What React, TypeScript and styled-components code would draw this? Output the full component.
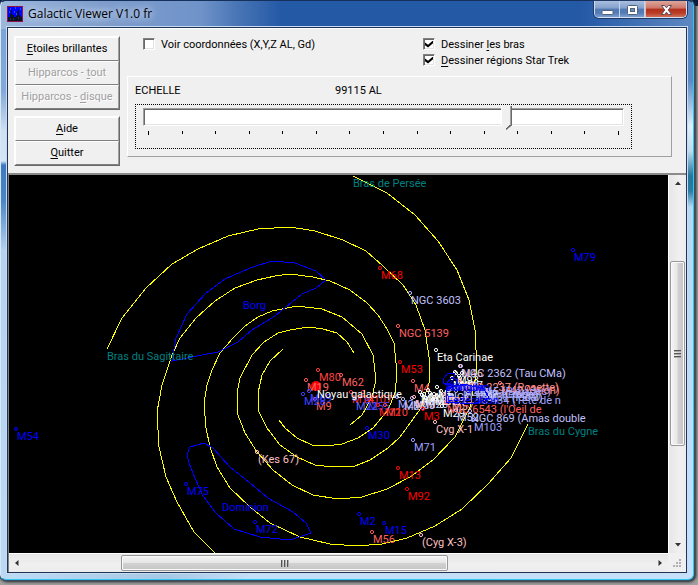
import React from "react";
import styled, { createGlobalStyle } from "styled-components";

const UI_FONT = `Roboto, "Liberation Sans", sans-serif`;
const TITLE_FONT = `"Open Sans", "Noto Sans", sans-serif`;

const GlobalStyle = createGlobalStyle`
  * { box-sizing: border-box; }
  body { margin: 0; background: #a0a0a0; font-family: ${UI_FONT}; font-size: 11px; color: #000; }
`;

/* ---------- window frame ---------- */

const Desktop = styled.div`
  min-height: 100vh;
  display: flex;
  padding: 0 4px 5px 0;
  background: linear-gradient(to right, #0a1c40, #14336a 60%, #0a1c40) top / 100% 6px no-repeat, #a0a0a0;
`;

const Frame = styled.main`
  flex: 1;
  min-width: 0;
  display: flex;
  flex-direction: column;
  border: 1px solid;
  border-color: #16305c #35c5ec #35c5ec #d5e8fa;
  border-radius: 6px;
  padding: 0 6px 6px;
  background:
    linear-gradient(to right, #9db7dc 0, #7e9dcc 100px, #6f93c9 200px, #4a76b6 235px, #2459a6 280px, #2459a6 580px, #5d88c2 100%) top / 100% 28px no-repeat,
    linear-gradient(#7ba3d4 0, #84a9d6 90px, #cfe0f1 130px, #d4e5f5 160px, #3f78bd 164px, #4d86c6 200px, #b6d2ee 250px, #bcd9f4 100%) left / 8px 100% no-repeat,
    linear-gradient(#5584c2 0, #5d8ac5 80px, #e0eef8 125px, #c0dcee 150px, #26749a 175px, #2b7ba2 190px, #b7d8f0 206px, #c4e0fc 100%) right / 8px 100% no-repeat,
    linear-gradient(to right, #bddcf6, #a5c8e6 24%, #c4dff8 36%, #c4e0fa) bottom / 100% 8px no-repeat;
  box-shadow: 0 0 0 1px #30506c, 1px 1px 3px 1px #222;
`;

const TitleBar = styled.header`
  height: 26px;
  flex: none;
  display: flex;
  align-items: flex-start;
  gap: 5px;
`;

const AppIcon = styled.svg`
  width: 16px;
  height: 16px;
  margin-top: 5px;
  flex: none;
`;

const Title = styled.h1`
  flex: 1;
  margin: 4px 0 0;
  font: 400 12px/18px ${TITLE_FONT};
  text-shadow: 0 0 6px #c5d5ee, 0 0 8px #c5d5ee, 0 0 10px #b5c9e8;
`;

const CaptionButtons = styled.div`
  display: flex;
  height: 17px;
  border: 1px solid #d0dff2;
  border-top: 0;
  border-radius: 0 0 5px 5px;
  overflow: hidden;
  box-shadow: 0 0 0 1px #203a68;
`;

const CaptionButton = styled.button<{ $close?: boolean }>`
  width: ${(p) => (p.$close ? 41 : 25)}px;
  display: grid;
  place-items: center;
  padding: 0;
  border: 0;
  border-left: ${(p) => (p.$close ? "1px solid #e5bdb5" : "0")};
  border-right: ${(p) => (p.$close ? "0" : "1px solid #c3d4ec")};
  background: ${(p) =>
    p.$close
      ? "linear-gradient(#dda59b 0, #cc7668 45%, #b2301c 50%, #b93c25 75%, #d0705a 100%)"
      : "linear-gradient(#a9bfdf 0, #839fcb 45%, #5179b4 50%, #537cb8 75%, #7f9fd0 100%)"};
`;

const Client = styled.div`
  flex: 1;
  min-height: 0;
  display: flex;
  flex-direction: column;
  border: 1px solid #1f3557;
  outline: 1px solid #c9dbf0;
  background: #f0f0f0;
`;

/* ---------- control panel ---------- */

const Panel = styled.section`
  display: flex;
  gap: 7px;
  padding: 7px 14px 16px 6px;
  height: 145px;
  flex: none;
  border-top: 1px solid #fff;
`;

const ButtonColumn = styled.div`
  width: 106px;
  flex: none;
  display: flex;
  flex-direction: column;
  gap: 6px;
`;

const ButtonGroup = styled.div`
  display: flex;
  flex-direction: column;
  border: 1px solid;
  border-color: #fff #696969 #696969 #fff;
`;

const PushButton = styled.button`
  height: 24px;
  padding: 0;
  border: 1px solid;
  border-color: #fff #a0a0a0 #808080 #fff;
  background: #f0f0f0;
  font: 400 11px/14px ${UI_FONT};
  color: #000;
  &:disabled { color: #a0a0a0; text-shadow: 1px 1px 0 #fff; }
  u { text-underline-offset: 2px; }
`;

const Settings = styled.div`
  flex: 1;
  min-width: 0;
  display: flex;
  flex-direction: column;
  justify-content: space-between;
`;

const Options = styled.div`
  display: grid;
  grid-template-columns: 280px 1fr;
  padding-left: 16px;
`;

const OptionList = styled.div`
  display: flex;
  flex-direction: column;
`;

const CheckLabel = styled.label`
  height: 16px;
  display: flex;
  align-items: center;
  gap: 6px;
  white-space: nowrap;
  u { text-underline-offset: 2px; }
`;

const CheckBox = styled.input`
  appearance: none;
  width: 12px;
  height: 12px;
  margin: 0;
  display: grid;
  place-items: center;
  border: 1px solid;
  border-color: #808080 #fff #fff #808080;
  box-shadow: inset 1px 1px 0 #696969, inset -1px -1px 0 #e3e3e3;
  background: #fff;
  &:checked::after {
    content: "";
    width: 8px;
    height: 7px;
    background: #000;
    clip-path: polygon(0 30%, 38% 62%, 100% 0, 100% 40%, 38% 100%, 0 68%);
  }
`;

const ScaleBox = styled.div`
  height: 81px;
  padding: 7px 39px 0 7px;
  border: 1px solid;
  border-color: #fff #a0a0a0 #a0a0a0 #fff;
`;

const ScaleCaption = styled.div`
  display: grid;
  grid-template-columns: 200px 1fr;
  line-height: 14px;
  margin-bottom: 6px;
`;

const SliderFrame = styled.div`
  height: 45px;
  padding: 2px 7px;
  border: 1px dotted #000;
`;

const Slider = styled.input`
  appearance: none;
  display: block;
  width: 100%;
  height: 24px;
  margin: 0;
  outline: 0;
  background: transparent;
  &::-webkit-slider-runnable-track {
    height: 18px;
    margin-bottom: 4px;
    border: 1px solid;
    border-color: #a0a0a0 #fff #fff #a0a0a0;
    box-shadow: inset 1px 1px 0 #696969, inset -1px -1px 0 #e3e3e3;
    background: #fff;
  }
  &::-webkit-slider-thumb {
    appearance: none;
    width: 11px;
    height: 24px;
    margin-top: -3px;
    background:
      linear-gradient(135deg, #f0f0f0 32%, #696969 32%) bottom right / 6px 5px no-repeat,
      linear-gradient(to right, #fff 1px, #f0f0f0 1px 9px, #a0a0a0 9px 10px, #696969 10px);
    clip-path: polygon(0 0, 100% 0, 100% 79%, 50% 100%, 0 79%);
  }
`;

const Ticks = styled.div`
  display: flex;
  justify-content: space-between;
  padding: 0 5px;
`;

const Tick = styled.span`
  width: 1px;
  height: 3px;
  background: #000;
  &:first-child, &:last-child { height: 4px; }
`;

/* ---------- viewport ---------- */

const Viewport = styled.section`
  flex: 1;
  display: grid;
  grid-template-columns: minmax(0, 1fr) 18px;
  grid-template-rows: minmax(378px, 1fr) 19px;
  border-top: 2px solid #8a8a8a;
  border-left: 1px solid #808080;
`;

const StarMap = styled.svg`
  display: block;
  width: 100%;
  height: 100%;
  background: #000;
  font-family: ${UI_FONT};
  font-size: 11px;
`;

const ScrollBar = styled.div<{ $vertical?: boolean }>`
  display: flex;
  flex-direction: ${(p) => (p.$vertical ? "column" : "row")};
  padding: ${(p) => (p.$vertical ? "0 1px" : "1px 0")};
  border: solid #fff;
  border-width: ${(p) => (p.$vertical ? "0 0 0 1px" : "1px 0 0")};
  background: linear-gradient(${(p) => (p.$vertical ? "to right" : "to bottom")}, #e6e6e6, #f0f0f0 60%, #ececec);
`;

const ScrollArrow = styled.button`
  width: 16px;
  height: 16px;
  flex: none;
  display: grid;
  place-items: center;
  padding: 0;
  border: 0;
  background: transparent;
`;

const ScrollGap = styled.div<{ $share: number }>`
  flex: ${(p) => p.$share} 0 0;
`;

const ScrollThumb = styled.div<{ $share: number; $vertical?: boolean }>`
  flex: ${(p) => p.$share} 0 0;
  display: flex;
  flex-direction: ${(p) => (p.$vertical ? "column" : "row")};
  align-items: center;
  justify-content: center;
  gap: 1px;
  border: 1px solid #989898;
  border-radius: 2px;
  box-shadow: inset 0 0 0 1px #fafafa;
  background: linear-gradient(${(p) => (p.$vertical ? "to right" : "to bottom")}, #f5f5f5, #e6e6e6 48%, #d2d2d2 52%, #c4c4c6);
`;

const Ridge = styled.span<{ $vertical?: boolean }>`
  width: ${(p) => (p.$vertical ? 7 : 2)}px;
  height: ${(p) => (p.$vertical ? 2 : 7)}px;
  background: ${(p) => (p.$vertical ? "linear-gradient(#555 50%, #aaa 50%)" : "linear-gradient(to right, #555 50%, #aaa 50%)")};
`;

const Grip = styled.svg`
  width: 10px;
  height: 10px;
  place-self: end;
  margin: 0 4px 3px 0;
`;

/* ---------- chart data ---------- */

const ARMS = [
  "107,349 122,318 146,288 172,264 198,249 228,236 258,229 290,227 315,231 343,240 366,251 383,266 403,285 416,305 425,330 429,357 429,383 421,408 400,437 388,448 370,460 355,466 333,467 315,465 297,457 280,445 267,428 258,410 258,393 262,375 270,361 283,349",
  "353,176 387,193 415,215 438,241 457,270 469,300 475,330 477,370 470,407 455,437 433,460 410,477 387,489 362,497 338,499 313,495 292,485 273,470 257,452 245,433 238,415 237,393 240,378 252,355 264,342 278,333 290,330 308,327 323,329 337,333 347,342 354,353",
  "528,424 511,458 488,484 462,509 435,526 407,538 382,544 357,546 330,544 300,537 270,523 250,507 230,488 217,467 210,447 206,428 204,403 207,385 212,370 220,353 233,338 245,326 258,317 272,311 297,306 322,309 342,317 362,334 373,355 376,380 372,397 362,415 350,425",
  "215,553 194,532 177,502 166,477 159,447 157,412 162,385 172,355 180,338 196,318 215,301 235,288 257,280 275,276 290,274 313,277 330,281 350,290 367,303 378,315 387,329 394,343 397,373 395,393 388,410 373,428 358,438 342,444 327,446 312,445 297,438 285,428 279,420",
];

const REGIONS = [
  "172,361 176,338 187,314 205,294 225,279 250,268 272,261 295,263 316,271 326,280 316,288 302,294 292,302 275,316 252,330 238,342 218,352 197,356",
  "204,443 190,447 187,454 189,463 195,478 203,496 216,513 234,529 260,537 290,540 311,533 306,523 293,512 268,498 250,483 230,467 213,448",
  "446,389 446,402 474,404 489,398 484,389 464,384",
  "444,378 448,373 455,374 453,380 448,385 443,383",
  "446,384 452,377 457,380 456,386",
];

type Star = [name: string, x: number, y: number, color: string];

const STARS: Star[] = [
  ["M68", 380, 268, "#f00"],
  ["NGC 3603", 410, 293, "#c0c0ff"],
  ["NGC 5139", 398, 326, "#ff6060"],
  ["M53", 400, 362, "#f00"],
  ["M79", 573, 250, "#00f"],
  ["M54", 16, 429, "#00f"],
  ["M75", 186, 484, "#00f"],
  ["M72", 255, 522, "#00f"],
  ["M2", 359, 514, "#00f"],
  ["M15", 384, 523, "#00f"],
  ["M56", 372, 532, "#ff6060"],
  ["(Cyg X-3)", 421, 535, "#ffc0c0"],
  ["M92", 407, 489, "#f00"],
  ["M13", 398, 468, "#f00"],
  ["M71", 413, 440, "#a0a0ff"],
  ["M30", 367, 428, "#00f"],
  ["(Kes 67)", 257, 452, "#ffc0c0"],
  ["M80", 318, 370, "#ff4040"],
  ["M62", 341, 375, "#ff6060"],
  ["M19", 306, 380, "#ff6060"],
  ["M9", 315, 399, "#ff6060"],
  ["M28", 303, 394, "#4040ff"],
  ["M69", 309, 391, "#4040ff"],
  ["M14", 351, 392, "#ff3030"],
  ["M107", 363, 392, "#f22"],
  ["M22", 355, 399, "#6060ff"],
  ["M55", 367, 399, "#4040ff"],
  ["M12", 378, 405, "#f22"],
  ["M10", 385, 405, "#ff4040"],
  ["M24", 397, 397, "#a0a0ff"],
  ["M23", 403, 399, "#c0c0ff"],
  ["M25", 412, 398, "#c0c0ff"],
  ["M4", 413, 381, "#ff6060"],
  ["M17", 414, 397, "#ffc0c0"],
  ["M3", 423, 409, "#f00"],
  ["M11", 420, 392, "#fff"],
  ["M16", 424, 394, "#fff"],
  ["M18", 428, 390, "#fff"],
  ["M26", 425, 397, "#d0d0ff"],
  ["M6", 437, 387, "#fff"],
  ["M21", 434, 394, "#fff"],
  ["M29", 442, 406, "#fff"],
  ["M52", 456, 410, "#d0d0ff"],
  ["M46", 460, 366, "#ffc0c0"],
  ["M93", 456, 373, "#fff"],
  ["M47", 460, 378, "#fff"],
  ["M41", 452, 378, "#fff"],
  ["NGC 2237 (Rosette)", 460, 380, "#ff9090"],
  ["M42 (Orion)", 500, 383, "#ff8080"],
  ["M45 (Pléiades)", 476, 384, "#a0a0ff"],
  ["M1 (Crabe)", 482, 387, "#c0c0ff"],
  ["M44 (Praesepe)", 462, 387, "#a0a0ff"],
  ["M31 (local)", 486, 390, "#c0c0ff"],
  ["NGC 7000", 448, 390, "#d0d0ff"],
  ["IC 434 (Tête de n", 477, 393, "#a0a0ff"],
  ["M27", 444, 394, "#ffc0c0"],
  ["M57", 451, 399, "#ffc0c0"],
  ["NGC 6543 (l'Oeil de", 446, 402, "#ff6060"],
  ["NGC 869 (Amas double", 470, 411, "#c0c0ff"],
  ["M103", 473, 420, "#a0a0ff"],
  ["Cyg X-1", 435, 422, "#ffc0c0"],
  ["NGC 2362 (Tau CMa)", 461, 366, "#c0c0ff"],
  ["Eta Carinae", 436, 350, "#fff"],
];

const CAPTIONS: Star[] = [
  ["Bras de Persée", 353, 187, "#008080"],
  ["Bras du Sagittaire", 107, 360, "#008080"],
  ["Bras du Cygne", 528, 435, "#008080"],
  ["Borg", 243, 309, "#00f"],
  ["Dominion", 222, 511, "#00f"],
  ["Noyau galactique", 317, 398, "#fff"],
  ["Romulan", 446, 391, "#00f"],
  ["Klingon", 448, 391, "#00f"],
  ["Fédération", 447, 404, "#00f"],
];

const CLUSTER = [
  [422, 395], [426, 398], [430, 393], [433, 399], [437, 396], [441, 391], [455, 372], [459, 376], [462, 373],
  [450, 388], [456, 391], [462, 389], [468, 393], [474, 389], [480, 392], [488, 390], [495, 392], [444, 399], [452, 395], [466, 397],
];

const ARROWS = {
  up: "M1 6 L4 2.5 L7 6 Z",
  down: "M1 2 L7 2 L4 5.5 Z",
  left: "M5.5 1 L5.5 7 L2 4 Z",
  right: "M2.5 1 L2.5 7 L6 4 Z",
};

const Arrow = ({ dir }: { dir: keyof typeof ARROWS }) => (
  <ScrollArrow aria-label={dir}>
    <svg width="8" height="8"><path d={ARROWS[dir]} fill="#333" /></svg>
  </ScrollArrow>
);

const Scroll = ({ vertical, shares }: { vertical?: boolean; shares: number[] }) => (
  <ScrollBar $vertical={vertical}>
    <Arrow dir={vertical ? "up" : "left"} />
    <ScrollGap $share={shares[0]} />
    <ScrollThumb $vertical={vertical} $share={shares[1]}>
      <Ridge $vertical={vertical} /><Ridge $vertical={vertical} /><Ridge $vertical={vertical} />
    </ScrollThumb>
    <ScrollGap $share={shares[2]} />
    <Arrow dir={vertical ? "down" : "right"} />
  </ScrollBar>
);

const Galaxy = () => (
  <StarMap role="img" aria-label="Galaxie">
    <g transform="translate(-9 -175)">
      <g fill="none" stroke="#ff0" shapeRendering="crispEdges">
        {ARMS.map((p) => <polyline key={p} points={p} />)}
      </g>
      <circle cx="316" cy="386" r="5" fill="#f00" />
      {STARS.map(([name, x, y, color]) => (
        <g key={name}>
          <circle cx={x} cy={y} r="1.6" fill="none" stroke={color} />
          <text x={x + 1} y={y + 11} fill={color}>{name}</text>
        </g>
      ))}
      <g fill="none">
        {CLUSTER.map(([x, y], i) => <circle key={i} cx={x} cy={y} r="1.6" stroke={i < 9 ? "#fff" : "#b8b8ff"} />)}
      </g>
      <g fill="none" stroke="#00f" shapeRendering="crispEdges">
        {REGIONS.map((p) => <polygon key={p} points={p} />)}
      </g>
      {CAPTIONS.map(([name, x, y, color]) => <text key={name} x={x} y={y} fill={color}>{name}</text>)}
    </g>
  </StarMap>
);

export default function App() {
  return (
    <>
      <GlobalStyle />
      <Desktop>
        <Frame>
          <TitleBar>
            <AppIcon viewBox="0 0 16 16">
              <rect x="0.5" y="0.5" width="15" height="15" fill="#00f" stroke="#90104c" />
              <path d="M1 15V11H3V8H4V4H5V9H7V11H9V10H10V5H11V4H12V9H13V11H14V10H15V15Z" fill="#071025" />
              <path d="M3 3h1M8 2h1M13 3h1M7 6h1M2 6h1M9 8h1" stroke="#4a9cff" />
              <path d="M6 13h1M11 12h1M3 13h1" stroke="#665040" />
            </AppIcon>
            <Title>Galactic Viewer V1.0 fr</Title>
            <CaptionButtons>
              <CaptionButton aria-label="Réduire">
                <svg width="13" height="13"><rect x="1" y="7.5" width="11" height="4" rx="1" fill="#fff" stroke="#53617a" /></svg>
              </CaptionButton>
              <CaptionButton aria-label="Agrandir">
                <svg width="13" height="13">
                  <rect x="1.5" y="2.5" width="10" height="9" rx="1" fill="#fff" stroke="#53617a" />
                  <rect x="4.5" y="5.5" width="4" height="3" fill="#6f8fbf" stroke="#53617a" />
                </svg>
              </CaptionButton>
              <CaptionButton $close aria-label="Fermer">
                <svg width="13" height="13" viewBox="0 0 13 13">
                  <path d="M1.5 2.5H4.5L6.5 4.8L8.5 2.5H11.5L8.3 7L11.5 11.5H8.5L6.5 9.2L4.5 11.5H1.5L4.7 7Z" fill="#fff" stroke="#5b4a58" />
                </svg>
              </CaptionButton>
            </CaptionButtons>
          </TitleBar>
          <Client>
            <Panel>
              <ButtonColumn>
                <ButtonGroup>
                  <PushButton><u>E</u>toiles brillantes</PushButton>
                  <PushButton disabled>Hipparcos - <u>t</u>out</PushButton>
                  <PushButton disabled>Hipparcos - <u>d</u>isque</PushButton>
                </ButtonGroup>
                <ButtonGroup>
                  <PushButton><u>A</u>ide</PushButton>
                  <PushButton><u>Q</u>uitter</PushButton>
                </ButtonGroup>
              </ButtonColumn>
              <Settings>
                <Options>
                  <OptionList>
                    <CheckLabel><CheckBox type="checkbox" />Voir coordonnées (X,Y,Z AL, Gd)</CheckLabel>
                  </OptionList>
                  <OptionList>
                    <CheckLabel><CheckBox type="checkbox" defaultChecked /><span>Dessiner <u>l</u>es bras</span></CheckLabel>
                    <CheckLabel><CheckBox type="checkbox" defaultChecked /><span><u>D</u>essiner régions Star Trek</span></CheckLabel>
                  </OptionList>
                </Options>
                <ScaleBox>
                  <ScaleCaption>
                    <label htmlFor="scale">ECHELLE</label>
                    <output htmlFor="scale">99115 AL</output>
                  </ScaleCaption>
                  <SliderFrame>
                    <Slider id="scale" type="range" min={0} max={1000} defaultValue={763} />
                    <Ticks>{Array.from({ length: 15 }, (_, i) => <Tick key={i} />)}</Ticks>
                  </SliderFrame>
                </ScaleBox>
              </Settings>
            </Panel>
            <Viewport>
              <Galaxy />
              <Scroll vertical shares={[70, 184, 91]} />
              <Scroll shares={[96, 325, 204]} />
              <Grip viewBox="0 0 10 10">
                <path d="M7 1h2M4 4h2M7 4h2M1 7h2M4 7h2M7 7h2" stroke="#b0b0b0" strokeWidth="2" />
              </Grip>
            </Viewport>
          </Client>
        </Frame>
      </Desktop>
    </>
  );
}
